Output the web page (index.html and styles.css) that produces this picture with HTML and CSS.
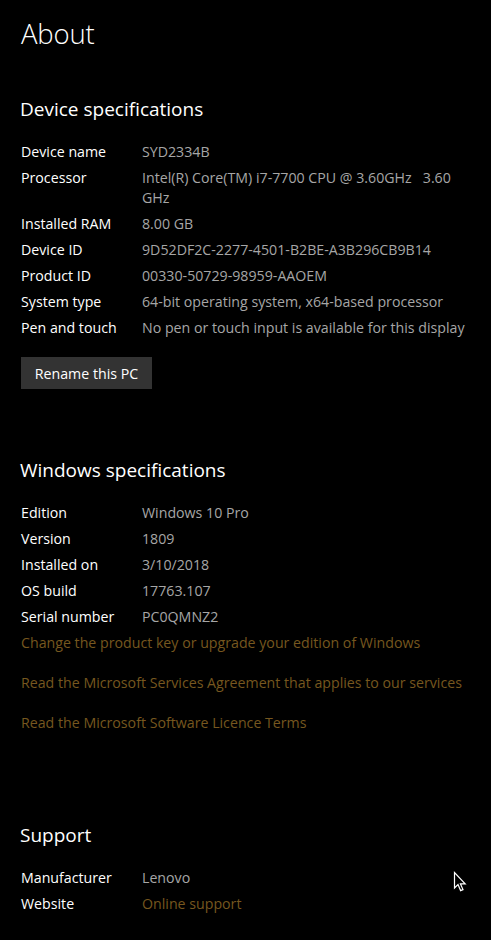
FILE: index.html
```html
<!DOCTYPE html>
<html>
<head>
<meta charset="utf-8">
<link rel="stylesheet" href="styles.css">
</head>
<body>
<div class="page">
  <h1 class="title">About</h1>

  <h2 class="heading h-device">Device specifications</h2>
  <div class="specs">
    <div class="row"><span class="label">Device name</span><span class="value">SYD2334B</span></div>
    <div class="row"><span class="label">Processor</span><span class="value">Intel(R) Core(TM) i7-7700 CPU @ 3.60GHz&nbsp;&nbsp; 3.60<br>GHz</span></div>
    <div class="row"><span class="label">Installed RAM</span><span class="value">8.00 GB</span></div>
    <div class="row"><span class="label">Device ID</span><span class="value">9D52DF2C-2277-4501-B2BE-A3B296CB9B14</span></div>
    <div class="row"><span class="label">Product ID</span><span class="value">00330-50729-98959-AAOEM</span></div>
    <div class="row"><span class="label">System type</span><span class="value">64-bit operating system, x64-based processor</span></div>
    <div class="row"><span class="label">Pen and touch</span><span class="value">No pen or touch input is available for this display</span></div>
  </div>
  <button class="btn">Rename this PC</button>

  <h2 class="heading h-windows">Windows specifications</h2>
  <div class="specs">
    <div class="row"><span class="label">Edition</span><span class="value">Windows 10 Pro</span></div>
    <div class="row"><span class="label">Version</span><span class="value">1809</span></div>
    <div class="row"><span class="label">Installed on</span><span class="value">3/10/2018</span></div>
    <div class="row"><span class="label">OS build</span><span class="value">17763.107</span></div>
    <div class="row"><span class="label">Serial number</span><span class="value">PC0QMNZ2</span></div>
  </div>
  <div class="links">
    <a class="link first">Change the product key or upgrade your edition of Windows</a>
    <a class="link">Read the Microsoft Services Agreement that applies to our services</a>
    <a class="link">Read the Microsoft Software Licence Terms</a>
  </div>

  <h2 class="heading h-support">Support</h2>
  <div class="specs">
    <div class="row"><span class="label">Manufacturer</span><span class="value">Lenovo</span></div>
    <div class="row"><span class="label">Website</span><span class="value link-inline">Online support</span></div>
  </div>
</div>
<svg class="cursor" width="14" height="22" viewBox="0 0 14 22">
  <path d="M1.5 1.5 L1.5 17 L5 13.6 L7.6 19.6 L10 18.6 L7.4 12.8 L12.2 12.8 Z" fill="#000" stroke="#fff" stroke-width="1.2" stroke-linejoin="miter"/>
</svg>
</body>
</html>
```

FILE: styles.css
```css
html, body {
  margin: 0;
  padding: 0;
  background: #000;
}
body {
  font-family: "Open Sans", "Noto Sans", sans-serif;
  color: #fff;
  min-height: 940px;
  position: relative;
}
.page {
  padding: 14px 0 0 21px;
  display: flex;
  flex-direction: column;
  align-items: flex-start;
}
.title {
  margin: 0;
  font-size: 27.5px;
  font-weight: 300;
  line-height: 40px;
  letter-spacing: -0.2px;
}
.heading {
  margin: 0;
  font-size: 19px;
  font-weight: 400;
  line-height: 28px;
  margin-left: -1px;
}
.h-device { margin-top: 41px; }
.h-windows { margin-top: 67px; }
.h-support { margin-top: 88px; }
.specs {
  margin-top: 19px;
  display: flex;
  flex-direction: column;
  gap: 6px;
  font-size: 14.2px;
  line-height: 20px;
}
.row {
  display: flex;
}
.label {
  width: 121px;
  flex: none;
  color: #fff;
}
.value {
  color: #a6a6a6;
  white-space: nowrap;
}
.btn {
  margin-top: 19px;
  width: 131px;
  height: 32px;
  background: #333;
  border: none;
  color: #fff;
  font-family: inherit;
  font-size: 14.2px;
  padding: 0;
}
.links {
  margin-top: 6px;
  display: flex;
  flex-direction: column;
  gap: 20px;
  font-size: 14.2px;
  line-height: 20px;
}
.link, .link-inline {
  color: #76571f;
}
.cursor {
  position: absolute;
  left: 453px;
  top: 871px;
}
```
